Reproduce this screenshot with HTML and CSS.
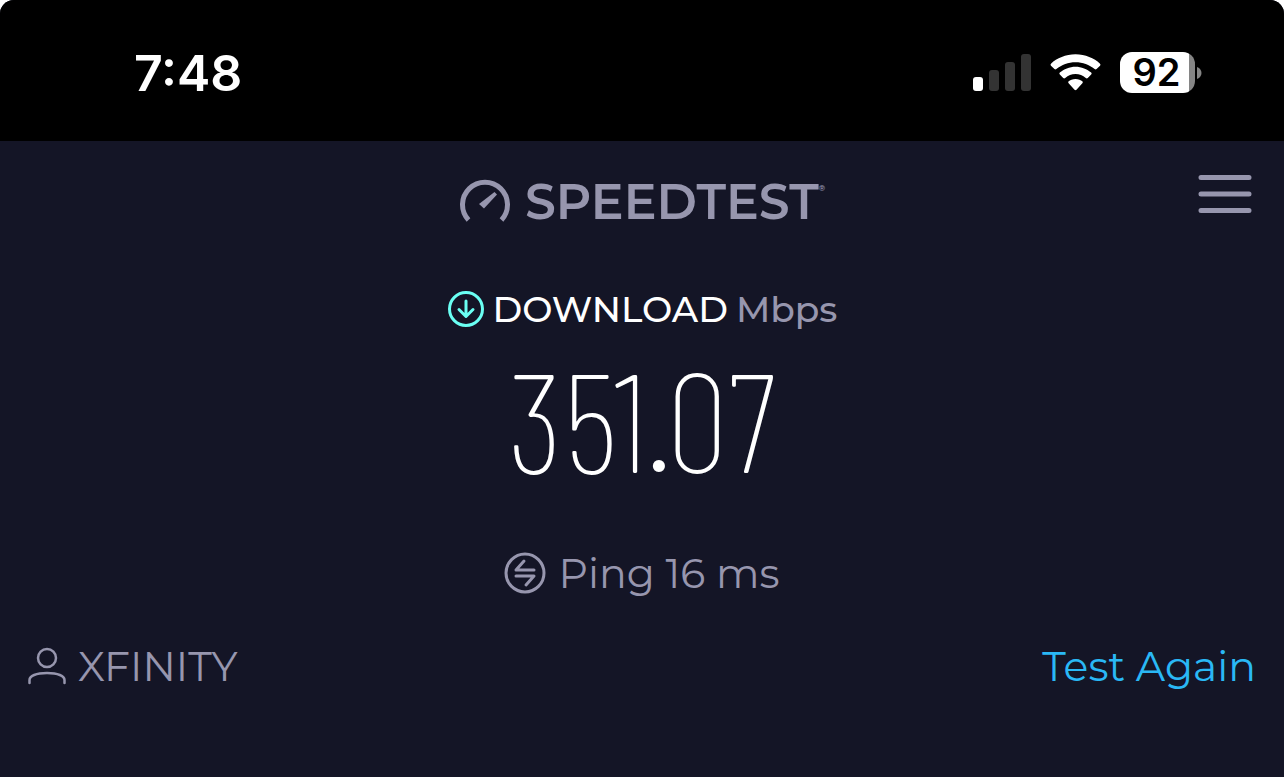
FILE: index.html
```
<!DOCTYPE html>
<html lang="en">
<head>
  <meta charset="utf-8">
  <meta name="viewport" content="width=device-width, initial-scale=1">
  <title>Speedtest</title>
  <link rel="stylesheet" href="styles.css">
</head>
<body>
  <div class="screen">
    <div class="status-bar">
      <time class="clock">7:48</time>
      <div class="status-icons">
        <svg class="signal" width="58" height="38" viewBox="0 0 58 38">
          <rect x="0" y="23" width="10" height="14" rx="3" fill="#fff"/>
          <rect x="16" y="16" width="10" height="21" rx="3" fill="#333"/>
          <rect x="32" y="8" width="10" height="29" rx="3" fill="#333"/>
          <rect x="48" y="0" width="10" height="37" rx="3" fill="#333"/>
        </svg>
        <svg class="wifi" width="51" height="38" viewBox="0 0 52 38" fill="#fff">
          <path d="M26 0C36 0 45 4 51 9.500Q52 10.500 51 11.500L47.500 15Q46.500 16 45.500 15C40 10.500 33.500 8 26 8S12 10.500 6.500 15Q5.500 16 4.500 15L1 11.500Q0 10.500 1 9.500C7 4 16 0 26 0Z"/>
          <path d="M26 12.500C32 12.500 38 15 42 18.500Q43 19.500 42 20.500L38.500 24Q37.500 25 36.500 24C33.500 21.500 30 20 26 20S18.500 21.500 15.500 24Q14.500 25 13.500 24L10 20.500Q9 19.500 10 18.500C14 15 20 12.500 26 12.500Z"/>
          <path d="M26 25C29 25 31.500 26 33 27.500Q34 28.500 33 29.500L27 36Q26 37 25 36L19 29.500Q18 28.500 19 27.500C20.500 26 23 25 26 25Z"/>
        </svg>
        <div class="battery">
          <span class="battery-level">92</span>
          <svg class="battery-tip" width="5" height="12" viewBox="0 0 5 12">
            <path d="M0 0C6 2 6 10 0 12Z" fill="#858585"/>
          </svg>
        </div>
      </div>
    </div>

    <header class="header">
      <div class="logo">
        <svg class="logo-icon" width="52" height="44" viewBox="0 0 52 44">
          <path d="M9.500 41A22.500 22.500 0 1 1 42.500 41" fill="none" stroke="#9796ae" stroke-width="5"/>
          <path d="M35.500 13L38 15.500L25 29.500L20 25Z" fill="#9796ae"/>
        </svg>
        <h1 class="logo-name">SPEEDTEST<sup class="mark">®</sup></h1>
      </div>
      <button class="menu" type="button" aria-label="Menu">
        <svg width="54" height="38" viewBox="0 0 54 38" stroke="#9796ae" stroke-width="5" stroke-linecap="round">
          <path d="M3 2.500H51M3 19H51M3 35.500H51"/>
        </svg>
      </button>
    </header>

    <main class="results">
      <h2 class="download">
        <svg width="38" height="38" viewBox="0 0 38 38" fill="none" stroke="#6afff3" stroke-width="3" stroke-linecap="round" stroke-linejoin="round">
          <circle cx="19" cy="19" r="16.500"/>
          <path d="M19 11V26M12 19.500L19 26.500L26 19.500"/>
        </svg>
        <span>DOWNLOAD</span>
        <span class="unit">Mbps</span>
      </h2>
      <p class="speed">351.07</p>
      <p class="ping">
        <svg width="42" height="42" viewBox="0 0 42 42" fill="none" stroke="#9796ae" stroke-width="3" stroke-linecap="round" stroke-linejoin="round">
          <circle cx="21" cy="21" r="19"/>
          <path d="M30 18H12L20 9M12 24H30L22 33"/>
        </svg>
        <span>Ping 16 ms</span>
      </p>
    </main>

    <footer class="footer">
      <div class="provider">
        <svg width="38" height="38" viewBox="0 0 38 38" fill="none" stroke="#9796ae" stroke-width="2.500" stroke-linecap="round">
          <circle cx="19" cy="11" r="9"/>
          <path d="M1.500 36V33C1.500 29 8 26 19 26S36.500 29 36.500 33V36"/>
        </svg>
        <span>XFINITY</span>
      </div>
      <a class="again" href="#">Test Again</a>
    </footer>
  </div>
</body>
</html>
```
FILE: styles.css
```
html {
  background: #fff;
}

body {
  margin: 0;
  font-family: Montserrat, Inter, "Liberation Sans", sans-serif;
  color: #9796ae;
}

h1, h2, p {
  margin: 0;
}

svg {
  display: block;
  flex-shrink: 0;
}

.screen {
  box-sizing: border-box;
  min-height: 100vh;
  background: #141526;
  border-radius: 14px 14px 0 0;
  overflow: hidden;
}

/* Status bar */
.status-bar {
  display: flex;
  justify-content: space-between;
  align-items: center;
  box-sizing: border-box;
  height: 141px;
  padding: 4px 82px 0 134px;
  background: #000;
  color: #fff;
  font-family: Inter, "Liberation Sans", sans-serif;
}

.clock {
  font-size: 50px;
  font-weight: 600;
}

.status-icons {
  display: flex;
  align-items: center;
  gap: 19px;
}

.battery {
  display: flex;
  align-items: center;
  gap: 2px;
}

.battery-level {
  width: 75px;
  padding-right: 2px;
  box-sizing: border-box;
  border-radius: 12px;
  background: linear-gradient(to right, #fff 69px, #858585 69px);
  color: #000;
  font-size: 38px;
  font-weight: 600;
  line-height: 41px;
  text-align: center;
}

/* Logo and menu */
.header {
  display: grid;
  grid-template-columns: 1fr auto 1fr;
  align-items: start;
  padding: 34px 32px 0;
}

.logo {
  grid-column: 2;
  display: flex;
  align-items: center;
  gap: 14px;
  padding-top: 2px;
}

.logo-icon {
  margin-bottom: 3px;
}

.logo-name {
  font-size: 49px;
  font-weight: 600;
  line-height: 50px;
}

.mark {
  font-size: 8px;
  line-height: 8px;
  vertical-align: 28px;
}

.menu {
  justify-self: end;
  padding: 0;
  border: 0;
  background: none;
  cursor: pointer;
}

/* Results */
.results {
  display: flex;
  flex-direction: column;
  align-items: center;
}

.download {
  display: flex;
  align-items: center;
  gap: 8px;
  margin-top: 58px;
  color: #fff;
  font-size: 36px;
  font-weight: 500;
  line-height: 48px;
}

.unit {
  color: #9796ae;
}

.speed {
  margin-top: 14px;
  color: #fff;
  font-family: "Barlow Condensed", "Roboto Condensed", sans-serif;
  font-size: 140px;
  font-weight: 200;
  line-height: 140px;
}

.ping {
  display: flex;
  align-items: center;
  gap: 12px;
  margin-top: 62px;
  font-size: 41px;
  font-weight: 400;
  line-height: 48px;
}

/* Provider and retest */
.footer {
  display: flex;
  justify-content: space-between;
  align-items: center;
  margin-top: 45px;
  padding: 0 28px;
  font-size: 41px;
  font-weight: 400;
  line-height: 48px;
}

.provider {
  display: flex;
  align-items: center;
  gap: 12px;
}

.again {
  color: #2ab8f5;
  text-decoration: none;
}
```
